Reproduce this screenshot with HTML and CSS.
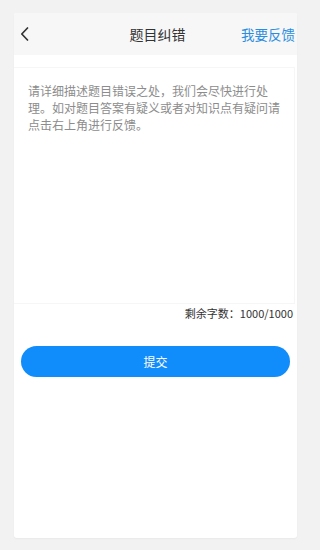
FILE: index.html
```html
<!DOCTYPE html>
<html lang="zh">
<head>
<meta charset="utf-8">
<link rel="stylesheet" href="styles.css">
</head>
<body>
<div class="card">
  <div class="header">
    <div class="back">
      <svg width="9" height="14" viewBox="0 0 9 14"><path d="M7.5 1 L1.8 7 L7.5 13" fill="none" stroke="#333" stroke-width="1.7" stroke-linecap="round" stroke-linejoin="round"/></svg>
    </div>
    <div class="title">题目纠错</div>
    <div class="link">我要反馈</div>
  </div>
  <div class="body">
    <div class="textarea">请详细描述题目错误之处，我们会尽快进行处理。如对题目答案有疑义或者对知识点有疑问请点击右上角进行反馈。</div>
    <div class="counter">剩余字数：1000/1000</div>
    <div class="btn">提交</div>
  </div>
</div>
</body>
</html>
```

FILE: styles.css
```css
html, body {
  margin: 0;
  padding: 0;
  background: #f2f2f2;
}
body {
  width: 309px;
  padding: 13px 12px 12px 14px;
  height: 550px;
  box-sizing: border-box;
  font-family: "Noto Sans CJK SC", "Noto Sans", sans-serif;
}
.card {
  background: #fff;
  height: 525px;
  border-radius: 3px;
  box-shadow: 0 1px 2px rgba(0,0,0,0.04);
  display: flex;
  flex-direction: column;
  overflow: hidden;
}
.header {
  height: 42px;
  background: #f7f7f7;
  display: grid;
  grid-template-columns: 1fr auto 1fr;
  align-items: center;
  padding: 0 2px 0 6px;
}
.back {
  display: flex;
  align-items: center;
  height: 14px;
}
.back svg { display: block; }
.title {
  font-size: 14px;
  color: #333;
  line-height: 20px;
}
.link {
  justify-self: end;
  font-size: 13.5px;
  color: #2a8de0;
  line-height: 20px;
}
.body {
  display: flex;
  flex-direction: column;
  padding-top: 12px;
}
.textarea {
  height: 237px;
  box-sizing: border-box;
  padding: 14px 10px 14px 14px;
  margin-right: 2px;
  border: 1px solid #f6f6f6;
  border-left: none;
  font-size: 12px;
  line-height: 17px;
  color: #8c8c8c;
}
.counter {
  text-align: right;
  font-size: 11px;
  line-height: 14px;
  color: #333;
  margin-top: 2px;
  padding-right: 4px;
}
.btn {
  margin: 26px 7px 0 7px;
  height: 31px;
  border-radius: 16px;
  background: #118cfb;
  color: #fff;
  font-size: 12px;
  display: flex;
  align-items: center;
  justify-content: center;
}
```
